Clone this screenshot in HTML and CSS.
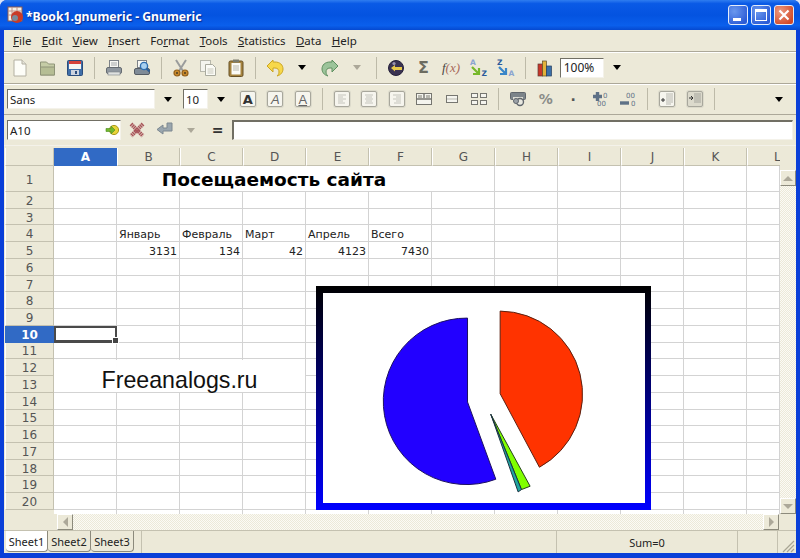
FILE: index.html
```html
<!DOCTYPE html>
<html lang="en">
<head>
  <meta charset="UTF-8">
  <title>*Book1.gnumeric - Gnumeric</title>
  <link rel="stylesheet" href="styles.css">
</head>
<body>
<div class="window">

  <div class="titlebar">
    <svg class="app-icon" width="18" height="18" viewBox="0 0 18 18"><rect x="1" y="1" width="14" height="14" fill="#f4f0e8" stroke="#8a5a50"/><path d="M1 5h14M1 9h14M5 1v14M10 1v14" stroke="#c09088"/><circle cx="10" cy="11" r="6" fill="#c83a28"/><circle cx="8" cy="12" r="3" fill="#7a8a9a"/></svg>
    <span class="title-text">*Book1.gnumeric - Gnumeric</span>
    <div class="win-btns">
      <div class="win-btn"><span class="min-bar"></span></div>
      <div class="win-btn"><span class="max-box"></span></div>
      <div class="win-btn close"><svg width="12" height="12" viewBox="0 0 12 12"><path d="M1.5 1.5l9 9M10.5 1.5l-9 9" stroke="#fff" stroke-width="2.2"/></svg></div>
    </div>
  </div>

  <div class="client">
    <div class="menubar">
      <span><u>F</u>ile</span><span><u>E</u>dit</span><span><u>V</u>iew</span><span><u>I</u>nsert</span><span>Fo<u>r</u>mat</span><span><u>T</u>ools</span><span><u>S</u>tatistics</span><span><u>D</u>ata</span><span><u>H</u>elp</span>
    </div>

    <div class="toolbar">
      <div class="tool"><svg width="20" height="20" viewBox="0 0 20 20"><path d="M4 2h8l4 4v12H4z" fill="#fdfdf8" stroke="#b3b0a2"/><path d="M12 2v4h4" fill="#e6e4da" stroke="#b3b0a2"/></svg></div>
      <div class="tool"><svg width="20" height="20" viewBox="0 0 20 20"><path d="M2.5 17V4h6l2 2h6v11z" fill="#c5cca6" stroke="#8f9478"/><path d="M2.5 9h14v8h-14z" fill="#b5bd94" stroke="#8f9478"/></svg></div>
      <div class="tool"><svg width="20" height="20" viewBox="0 0 20 20"><rect x="2.5" y="2.5" width="15" height="15" rx="1" fill="#3f6ea8" stroke="#2b4d7c"/><rect x="4" y="3" width="12" height="3" fill="#d5413a"/><rect x="4" y="6" width="12" height="5" fill="#f5f5f2"/><rect x="6" y="12" width="8" height="5" fill="#ccd3de"/><rect x="10" y="13" width="2" height="3" fill="#2b4d7c"/></svg></div>
      <div class="sep"></div>
      <div class="tool"><svg width="20" height="20" viewBox="0 0 20 20"><rect x="5.5" y="2.5" width="9" height="7" fill="#f8f8f4" stroke="#7d8288"/><path d="M7 5h6M7 7h6" stroke="#a5a8aa"/><rect x="2.5" y="9.5" width="15" height="6" rx="1.5" fill="#8f979f" stroke="#666c72"/><rect x="4" y="14" width="12" height="3" fill="#dfe1e0" stroke="#7d8288" stroke-width=".6"/></svg></div>
      <div class="tool"><svg width="20" height="20" viewBox="0 0 20 20"><rect x="5.5" y="2.5" width="9" height="7" fill="#f8f8f4" stroke="#7d8288"/><rect x="2.5" y="10.5" width="15" height="6" rx="1.5" fill="#7f8b97" stroke="#555c64"/><circle cx="12" cy="8" r="3.6" fill="#a8d0f0" stroke="#2f6fb0" stroke-width="1.4"/><path d="M14.5 10.5l3 3" stroke="#2f5f95" stroke-width="2"/></svg></div>
      <div class="sep"></div>
      <div class="tool"><svg width="20" height="20" viewBox="0 0 20 20"><path d="M5 2l7 11M15 2L8 13" stroke="#9a9c9c" stroke-width="2"/><circle cx="6" cy="15" r="3" fill="#c88a2c" stroke="#94601a" stroke-width="1.2"/><circle cx="14" cy="15" r="3" fill="#c88a2c" stroke="#94601a" stroke-width="1.2"/><circle cx="6" cy="15" r="1" fill="#4a3a20"/><circle cx="14" cy="15" r="1" fill="#4a3a20"/></svg></div>
      <div class="tool"><svg width="20" height="20" viewBox="0 0 20 20"><rect x="2.5" y="2.5" width="10" height="11" fill="#f4f4ee" stroke="#b8b8ac"/><path d="M7.5 6.5h7l3 3v8h-10z" fill="#fbfbf6" stroke="#a9aa9e"/><path d="M9.5 11h6M9.5 13h6M9.5 15h6" stroke="#c8c8bc"/></svg></div>
      <div class="tool"><svg width="20" height="20" viewBox="0 0 20 20"><rect x="3" y="3" width="14" height="15.5" rx="1.5" fill="#a6843f" stroke="#665026"/><rect x="5.5" y="5" width="9" height="11.5" fill="#fbfbf6"/><path d="M7 8h6M7 10h6M7 12h6" stroke="#b8b8ac"/><rect x="7" y="1.5" width="6" height="3" fill="#7c7c6c"/></svg></div>
      <div class="sep"></div>
      <div class="tool"><svg width="20" height="20" viewBox="0 0 20 20"><path d="M8 2L2 8l6 6v-4h2c3 0 4 2 4 4 0 2-1 3-2 4 4-1 6-4 6-7 0-4-3-7-8-7H8z" fill="#f7d84a" stroke="#cba522"/></svg></div>
      <div class="tool"><span class="arrow"></span></div>
      <div class="tool"><svg width="20" height="20" viewBox="0 0 20 20"><path d="M12 2l6 6-6 6v-4h-2c-3 0-4 2-4 4 0 2 1 3 2 4-4-1-6-4-6-7 0-4 3-7 8-7h2z" fill="#9cc49a" stroke="#5f8f60"/></svg></div>
      <div class="tool"><span class="arrow off"></span></div>
      <div class="sep"></div>
      <div class="tool"><svg width="20" height="20" viewBox="0 0 20 20"><circle cx="10" cy="10" r="7.5" fill="#3a3352" stroke="#25203a"/><path d="M5 10l4-3v2h7v3H9v1.5z" fill="#e8c84a"/><circle cx="8" cy="5.5" r="1.6" fill="#9a94b0"/></svg></div>
      <div class="tool sigma">Σ</div>
      <div class="tool fx"><i>f</i><em>(x)</em></div>
      <div class="tool"><svg width="20" height="20" viewBox="0 0 20 20"><text x="1" y="7" class="sort-a">A</text><path d="M3 9l7 7M10 10v6H4" stroke="#76b82a" stroke-width="2.2" fill="none"/><text x="12.5" y="18" class="sort-z">Z</text></svg></div>
      <div class="tool"><svg width="20" height="20" viewBox="0 0 20 20"><text x="1" y="7" class="sort-z">Z</text><path d="M3 9l7 7M10 10v6H4" stroke="#3a86c8" stroke-width="2.2" fill="none"/><text x="12.5" y="18" class="sort-a">A</text></svg></div>
      <div class="sep"></div>
      <div class="tool"><svg width="20" height="20" viewBox="0 0 20 20"><rect x="3" y="6" width="4.5" height="12" fill="#c8362a" stroke="#5c3a36" stroke-width=".7"/><rect x="7.5" y="3" width="4" height="15" fill="#e2b23a" stroke="#5c4a26" stroke-width=".7"/><rect x="11.5" y="8" width="5" height="10" fill="#3a6fa8" stroke="#2a3f5c" stroke-width=".7"/></svg></div>
      <div class="combo zoom-combo">100%</div>
      <div class="drop"><span class="arrow"></span></div>
    </div>

    <div class="toolbar second">
      <div class="combo font-combo">Sans</div>
      <div class="drop"><span class="arrow"></span></div>
      <div class="combo size-combo">10</div>
      <div class="drop"><span class="arrow"></span></div>
      <div class="tool"><span class="boxed fmt-bold">A</span></div>
      <div class="tool"><span class="boxed fmt-italic">A</span></div>
      <div class="tool"><span class="boxed fmt-under">A</span></div>
      <div class="sep"></div>
      <div class="tool"><span class="boxed"><svg width="12" height="12" viewBox="0 0 12 12"><path d="M2 2h8M2 4h5M2 6h8M2 8h5M2 10h7" stroke="#c4c4bc"/></svg></span></div>
      <div class="tool"><span class="boxed"><svg width="12" height="12" viewBox="0 0 12 12"><path d="M2 2h8M3 4h6M2 6h8M3 8h6M2 10h8" stroke="#c4c4bc"/></svg></span></div>
      <div class="tool"><span class="boxed"><svg width="12" height="12" viewBox="0 0 12 12"><path d="M2 2h8M5 4h5M2 6h8M5 8h5M3 10h7" stroke="#c4c4bc"/></svg></span></div>
      <div class="tool"><svg width="18" height="14" viewBox="0 0 18 14"><rect x="1.5" y="1.5" width="15" height="11" fill="#f4f4ee" stroke="#767670"/><path d="M9 2v4M2 7h14" stroke="#767670" stroke-width="1.4"/><rect x="3" y="3" width="4" height="3" fill="#b8b8b0"/><rect x="11" y="3" width="4" height="3" fill="#b8b8b0"/></svg></div>
      <div class="tool"><svg width="14" height="10" viewBox="0 0 14 10"><rect x="1.5" y="1.5" width="11" height="7" fill="#f4f4ee" stroke="#767670"/><path d="M2 5h10" stroke="#b8b8b0"/></svg></div>
      <div class="tool"><svg width="18" height="14" viewBox="0 0 18 14"><rect x="1.5" y="1.5" width="6" height="4" fill="#f4f4ee" stroke="#767670"/><rect x="10.5" y="1.5" width="6" height="4" fill="#f4f4ee" stroke="#767670"/><rect x="1.5" y="8.5" width="6" height="4" fill="#f4f4ee" stroke="#767670"/><rect x="10.5" y="8.5" width="6" height="4" fill="#f4f4ee" stroke="#767670"/></svg></div>
      <div class="sep"></div>
      <div class="tool"><svg width="18" height="16" viewBox="0 0 18 16"><rect x="1.5" y="1.5" width="15" height="7" rx="1" fill="#7c848a" stroke="#60666c"/><rect x="4" y="6" width="10" height="4" fill="#dcdcd4"/><circle cx="11" cy="11" r="3.5" fill="#e8e8e0" stroke="#60666c" stroke-width="1.4"/><circle cx="7" cy="10" r="2.5" fill="#9ca2a8" stroke="#60666c"/></svg></div>
      <div class="tool percent">%</div>
      <div class="tool dot">.</div>
      <div class="tool"><svg width="18" height="16" viewBox="0 0 18 16"><path d="M5.5 1v9M1 5.5h9" stroke="#5e7186" stroke-width="3.4"/><text x="11" y="7" class="zeros">0</text><text x="5" y="15" class="zeros">00</text></svg></div>
      <div class="tool"><svg width="18" height="16" viewBox="0 0 18 16"><path d="M1 12h9" stroke="#5e7186" stroke-width="3.4"/><text x="7" y="7" class="zeros">00</text><text x="12" y="15" class="zeros">0</text></svg></div>
      <div class="sep"></div>
      <div class="tool"><span class="boxed"><svg width="14" height="14" viewBox="0 0 14 14"><path d="M6 2h7M6 4h7M6 6h7M6 8h7M6 10h7M6 12h5" stroke="#b8b8b0"/><path d="M1 8h4M3 6v4" stroke="#333"/></svg></span></div>
      <div class="tool"><span class="boxed dim"><svg width="14" height="14" viewBox="0 0 14 14"><path d="M6 2h7M6 4h7M6 6h7M6 8h7M6 10h7" stroke="#a4a49c"/><path d="M1 6h4" stroke="#333"/><path d="M3 4l2 2-2 2" stroke="#333" fill="none"/></svg></span></div>
      <div class="sep"></div>
      <div class="drop end"><span class="arrow"></span></div>
    </div>

    <div class="formulabar">
      <div class="combo name-box">A10
        <svg width="14" height="12" viewBox="0 0 14 12"><circle cx="9" cy="6" r="4.6" fill="#e8d43a" stroke="#a8981c"/><path d="M1 4.5h5V2l4 4-4 4V7.5H1z" fill="#72b82e" stroke="#4c8c1c" stroke-width=".6"/></svg>
      </div>
      <div class="tool"><svg width="18" height="18" viewBox="0 0 18 18"><path d="M3 3l12 12M15 3L3 15" stroke="#a8555a" stroke-width="4" stroke-dasharray="1.5 .6"/></svg></div>
      <div class="tool"><svg width="20" height="18" viewBox="0 0 20 18"><path d="M13 2h5v8H9v3L3 8.5 9 4v3h4z" fill="#9aa6ae" stroke="#7c8890"/></svg></div>
      <div class="drop cancel"><span class="arrow off"></span></div>
      <div class="equals">=</div>
      <div class="combo formula-input"></div>
    </div>

    <div class="sheet">
      <div class="grid">
        <div class="corner"></div><div class="ch active">A</div><div class="ch">B</div><div class="ch">C</div><div class="ch">D</div><div class="ch">E</div><div class="ch">F</div><div class="ch">G</div><div class="ch">H</div><div class="ch">I</div><div class="ch">J</div><div class="ch">K</div><div class="ch last">L</div>
        <div class="rh">1</div><div class="c heading">Посещаемость сайта</div><div class="c"></div><div class="c"></div><div class="c"></div><div class="c"></div><div class="c"></div>
        <div class="rh">2</div><div class="c"></div><div class="c"></div><div class="c"></div><div class="c"></div><div class="c"></div><div class="c"></div><div class="c"></div><div class="c"></div><div class="c"></div><div class="c"></div><div class="c"></div><div class="c"></div>
        <div class="rh">3</div><div class="c"></div><div class="c"></div><div class="c"></div><div class="c"></div><div class="c"></div><div class="c"></div><div class="c"></div><div class="c"></div><div class="c"></div><div class="c"></div><div class="c"></div><div class="c"></div>
        <div class="rh">4</div><div class="c"></div><div class="c">Январь</div><div class="c">Февраль</div><div class="c">Март</div><div class="c">Апрель</div><div class="c">Всего</div><div class="c"></div><div class="c"></div><div class="c"></div><div class="c"></div><div class="c"></div><div class="c"></div>
        <div class="rh">5</div><div class="c"></div><div class="c num">3131</div><div class="c num">134</div><div class="c num">42</div><div class="c num">4123</div><div class="c num">7430</div><div class="c"></div><div class="c"></div><div class="c"></div><div class="c"></div><div class="c"></div><div class="c"></div>
        <div class="rh">6</div><div class="c"></div><div class="c"></div><div class="c"></div><div class="c"></div><div class="c"></div><div class="c"></div><div class="c"></div><div class="c"></div><div class="c"></div><div class="c"></div><div class="c"></div><div class="c"></div>
        <div class="rh">7</div><div class="c"></div><div class="c"></div><div class="c"></div><div class="c"></div><div class="c"></div><div class="c"></div><div class="c"></div><div class="c"></div><div class="c"></div><div class="c"></div><div class="c"></div><div class="c"></div>
        <div class="rh">8</div><div class="c"></div><div class="c"></div><div class="c"></div><div class="c"></div><div class="c"></div><div class="c"></div><div class="c"></div><div class="c"></div><div class="c"></div><div class="c"></div><div class="c"></div><div class="c"></div>
        <div class="rh">9</div><div class="c"></div><div class="c"></div><div class="c"></div><div class="c"></div><div class="c"></div><div class="c"></div><div class="c"></div><div class="c"></div><div class="c"></div><div class="c"></div><div class="c"></div><div class="c"></div>
        <div class="rh active">10</div><div class="c selected"></div><div class="c"></div><div class="c"></div><div class="c"></div><div class="c"></div><div class="c"></div><div class="c"></div><div class="c"></div><div class="c"></div><div class="c"></div><div class="c"></div><div class="c"></div>
        <div class="rh">11</div><div class="c"></div><div class="c"></div><div class="c"></div><div class="c"></div><div class="c"></div><div class="c"></div><div class="c"></div><div class="c"></div><div class="c"></div><div class="c"></div><div class="c"></div><div class="c"></div>
        <div class="rh">12</div><div class="c"></div><div class="c"></div><div class="c"></div><div class="c"></div><div class="c"></div><div class="c"></div><div class="c"></div><div class="c"></div><div class="c"></div><div class="c"></div><div class="c"></div><div class="c"></div>
        <div class="rh">13</div><div class="c"></div><div class="c"></div><div class="c"></div><div class="c"></div><div class="c"></div><div class="c"></div><div class="c"></div><div class="c"></div><div class="c"></div><div class="c"></div><div class="c"></div><div class="c"></div>
        <div class="rh">14</div><div class="c"></div><div class="c"></div><div class="c"></div><div class="c"></div><div class="c"></div><div class="c"></div><div class="c"></div><div class="c"></div><div class="c"></div><div class="c"></div><div class="c"></div><div class="c"></div>
        <div class="rh">15</div><div class="c"></div><div class="c"></div><div class="c"></div><div class="c"></div><div class="c"></div><div class="c"></div><div class="c"></div><div class="c"></div><div class="c"></div><div class="c"></div><div class="c"></div><div class="c"></div>
        <div class="rh">16</div><div class="c"></div><div class="c"></div><div class="c"></div><div class="c"></div><div class="c"></div><div class="c"></div><div class="c"></div><div class="c"></div><div class="c"></div><div class="c"></div><div class="c"></div><div class="c"></div>
        <div class="rh">17</div><div class="c"></div><div class="c"></div><div class="c"></div><div class="c"></div><div class="c"></div><div class="c"></div><div class="c"></div><div class="c"></div><div class="c"></div><div class="c"></div><div class="c"></div><div class="c"></div>
        <div class="rh">18</div><div class="c"></div><div class="c"></div><div class="c"></div><div class="c"></div><div class="c"></div><div class="c"></div><div class="c"></div><div class="c"></div><div class="c"></div><div class="c"></div><div class="c"></div><div class="c"></div>
        <div class="rh">19</div><div class="c"></div><div class="c"></div><div class="c"></div><div class="c"></div><div class="c"></div><div class="c"></div><div class="c"></div><div class="c"></div><div class="c"></div><div class="c"></div><div class="c"></div><div class="c"></div>
        <div class="rh">20</div><div class="c"></div><div class="c"></div><div class="c"></div><div class="c"></div><div class="c"></div><div class="c"></div><div class="c"></div><div class="c"></div><div class="c"></div><div class="c"></div><div class="c"></div><div class="c"></div>
        <div class="stub"></div><div class="c"></div><div class="c"></div><div class="c"></div><div class="c"></div><div class="c"></div><div class="c"></div><div class="c"></div><div class="c"></div><div class="c"></div><div class="c"></div><div class="c"></div><div class="c"></div>

        <div class="textbox">Freeanalogs.ru</div>
        <div class="chart">
          <svg class="pie" viewBox="36 38 967 630">
            <path d="M470 113V365L555 597A250 250 0 1 1 470 113Z" fill="#2200ff" stroke="#1c1060" stroke-width="3"/>
            <path d="M568 92V340L686 561A250 250 0 0 0 568 92Z" fill="#ff3300" stroke="#5a2010" stroke-width="3"/>
            <path d="M540 402L658 618 632 628Z" fill="#80ff00" stroke="#24401c" stroke-width="3"/>
            <path d="M540 402L632 628 622 635Z" fill="#1fa5a0" stroke="#1c3040" stroke-width="3"/>
          </svg>
        </div>
      </div>
      <div class="vscroll">
        <div class="sb-gap"></div>
        <div class="sb-btn"><span class="tri up"></span></div>
        <div class="track"></div>
        <div class="sb-btn"><span class="tri down"></span></div>
      </div>
    </div>

    <div class="hscroll">
      <div class="sb-btn first"><span class="tri left"></span></div>
      <div class="track"></div>
      <div class="sb-btn"><span class="tri right"></span></div>
    </div>

    <div class="statusbar">
      <div class="tabs">
        <div class="tab current">Sheet1</div>
        <div class="tab">Sheet2</div>
        <div class="tab">Sheet3</div>
      </div>
      <div class="panel blank"></div>
      <div class="panel sum">Sum=0</div>
      <div class="panel rest"></div>
      <svg class="grip" width="14" height="14" viewBox="0 0 14 14"><path d="M13 2L2 13M13 6L6 13M13 10l-3 3" stroke="#a8a594" stroke-width="1.2"/></svg>
    </div>
  </div>
</div>
</body>
</html>
```

FILE: styles.css
```css
* { box-sizing: border-box; }

body {
  margin: 0;
  background: #d8e4f8;
  font-family: "Noto Sans", sans-serif;
  font-size: 11px;
  color: #222;
}

.window {
  width: 800px;
  height: 558px;
  display: flex;
  flex-direction: column;
  background: #0a3fd8;
  border-radius: 7px 7px 0 0;
  overflow: hidden;
}

/* title bar */
.titlebar {
  height: 30px;
  flex: none;
  display: flex;
  align-items: center;
  padding: 0 6px 0 7px;
  background: linear-gradient(#2f7df0 0, #0a5ae6 12%, #0453e0 50%, #0a5fec 85%, #0549d0 100%);
}

.app-icon { margin-right: 1px; }

.title-text {
  color: #fff;
  font-family: "Noto Sans", sans-serif;
  font-weight: bold;
  font-size: 12.2px;
  padding-top: 2px;
  text-shadow: 1px 1px 1px #0a2a90;
}

.win-btns {
  margin-left: auto;
  display: flex;
  gap: 3px;
}

.win-btn {
  width: 20px;
  height: 20px;
  border: 1px solid #e4ecfa;
  border-radius: 3px;
  background: radial-gradient(circle at 30% 30%, #6a98ee, #2c5cd6 80%);
  display: flex;
  align-items: center;
  justify-content: center;
}

.win-btn.close { background: radial-gradient(circle at 30% 30%, #ec9a80, #d24a28 80%); }

.min-bar {
  width: 8px;
  height: 3px;
  background: #fff;
  margin-top: 9px;
  margin-right: 3px;
}

.max-box {
  width: 12px;
  height: 12px;
  border: 1px solid #fff;
  border-top-width: 3px;
}

/* client area */
.client {
  flex: 1;
  min-height: 0;
  margin: 0 4px 5px;
  background: #ece9d8;
  display: flex;
  flex-direction: column;
}

.menubar {
  height: 22px;
  flex: none;
  display: flex;
  align-items: center;
  gap: 10.3px;
  padding-left: 9px;
  font-size: 11.5px;
  border-bottom: 1px solid #aca899;
  box-shadow: 0 1px 0 #fff;
}

.toolbar {
  height: 32px;
  flex: none;
  display: flex;
  align-items: center;
  padding-left: 2.25px;
  border-bottom: 1px solid #aca899;
  box-shadow: inset 0 1px 0 #fff;
}

.toolbar.second {
  height: 31px;
  padding-left: 3px;
}

.tool {
  width: 27.5px;
  height: 26px;
  flex: none;
  display: flex;
  align-items: center;
  justify-content: center;
}

.sep {
  width: 11.5px;
  height: 22px;
  flex: none;
}

.sep::after {
  content: "";
  display: block;
  width: 1px;
  height: 22px;
  margin: 0 auto;
  background: #bdbaa8;
}

.arrow {
  width: 0;
  height: 0;
  border-left: 4.5px solid transparent;
  border-right: 4.5px solid transparent;
  border-top: 5px solid #000;
}

.arrow.off { border-top-color: #aca899; }

.drop {
  width: 26px;
  height: 22px;
  flex: none;
  display: flex;
  align-items: center;
  justify-content: center;
}

.drop.end {
  margin-left: auto;
  margin-right: 4px;
}

.combo {
  height: 20px;
  flex: none;
  display: flex;
  align-items: center;
  padding-left: 2px;
  background: #fff;
  font-size: 11.5px;
  border-top: 1px solid #716f64;
  border-left: 1px solid #716f64;
  border-right: 1px solid #f4f2ea;
  border-bottom: 1px solid #f4f2ea;
}

.zoom-combo {
  width: 44px;
  margin-left: 1px;
  font-size: 12px;
  padding-left: 3px;
}

.font-combo { width: 148px; }
.size-combo { width: 25px; margin-left: 2px; }

.boxed {
  width: 16px;
  height: 16px;
  display: flex;
  align-items: center;
  justify-content: center;
  background: #f6f5ee;
  border: 1px solid #a8a79c;
  border-radius: 2px;
  box-shadow: 0 0 0 1px #dcdacb;
}

.boxed.dim { background: #dcdacc; }

.fmt-bold {
  font: bold 13px "DejaVu Sans", sans-serif;
  color: #333;
}

.fmt-italic {
  font: italic 13px "Liberation Sans", sans-serif;
  color: #666;
}

.fmt-under {
  font: 13px "Liberation Sans", sans-serif;
  color: #666;
  text-decoration: underline;
}

.sigma {
  font: bold 16px "DejaVu Sans", sans-serif;
  color: #6c6c60;
}

.fx {
  font: italic 13px "Liberation Serif", serif;
  color: #444;
}

.fx em { color: #a86858; }

.sort-a {
  font: bold 7.5px "DejaVu Sans", sans-serif;
  fill: #8aa4d0;
}

.sort-z {
  font: bold 7.5px "DejaVu Sans", sans-serif;
  fill: #2a5a9a;
}

.percent {
  font: bold 14px "DejaVu Sans", sans-serif;
  color: #8a8c88;
}

.dot {
  font: bold 14px "DejaVu Sans", sans-serif;
  color: #555;
  padding-bottom: 6px;
}

.zeros {
  font: 7px "DejaVu Sans", sans-serif;
  fill: #5e7186;
}

/* formula bar */
.formulabar {
  height: 31px;
  flex: none;
  display: flex;
  align-items: center;
  padding-left: 3px;
  border-bottom: 1px solid #f4f2ea;
}

.name-box {
  width: 114px;
  justify-content: space-between;
  padding-right: 0;
}

.name-box svg { margin-right: 1px; }

.formulabar .tool:nth-child(2) { margin-left: 2px; }

.cancel { width: 25px; }

.equals {
  width: 29px;
  text-align: center;
  font: bold 14px "DejaVu Sans", sans-serif;
  color: #333;
  flex: none;
}

.formula-input {
  flex: 1;
  margin-right: 3px;
  border-top: 2px solid #716f64;
  border-left: 2px solid #716f64;
}

/* sheet */
.sheet {
  height: 366px;
  flex: none;
  margin-top: 2px;
  display: flex;
  padding-left: 1px;
}

.grid {
  position: relative;
  width: 775px;
  height: 366px;
  display: grid;
  grid-template-columns: 49px repeat(11, 63px) 33px;
  grid-template-rows: 18px 26px repeat(19, 16.74px) 4px;
  background: #fff;
  font-family: "DejaVu Sans", sans-serif;
  overflow: hidden;
}

.corner, .ch, .rh {
  background: #ece9d8;
  border-right: 1px solid #c4c1b0;
  border-bottom: 1px solid #c4c1b0;
  border-left: 1px solid #fff;
  color: #555;
  font-size: 12px;
  display: flex;
  align-items: center;
  justify-content: center;
}

.ch { padding-top: 1px; }
.rh { padding-top: 2px; }

.ch.last {
  justify-content: flex-start;
  padding-left: 26px;
  border-right: 0;
}

.active {
  background: #316ac5;
  color: #fff;
  font-weight: bold;
  border-color: #316ac5;
}

.stub { background: #ece9d8; }

.c {
  border-right: 1px solid #d3d3d3;
  border-bottom: 1px solid #d3d3d3;
  padding: 4px 2px 0;
  font-size: 11px;
  line-height: 12px;
  color: #222;
  white-space: nowrap;
  display: flex;
  align-items: center;
  min-width: 0;
}

.num { justify-content: flex-end; }

.heading {
  grid-column: span 7;
  justify-content: center;
  padding-top: 2px;
  font-size: 18.5px;
  line-height: 22px;
  font-weight: bold;
  color: #000;
}

.selected {
  position: relative;
  border: 2px solid #4a4a4a;
  border-bottom-width: 3px;
}

.selected::after {
  content: "";
  position: absolute;
  right: -4px;
  bottom: -4px;
  width: 5px;
  height: 5px;
  background: #444;
  border: 1px solid #fff;
}

/* things floating over the cells */
.textbox {
  position: absolute;
  left: 49px;
  top: 212px;
  width: 251px;
  height: 32px;
  padding-top: 8px;
  background: #fff;
  display: flex;
  align-items: center;
  justify-content: center;
  font: 23.2px "Liberation Sans", sans-serif;
  color: #111;
}

.chart {
  position: absolute;
  left: 311px;
  top: 138px;
  width: 335px;
  height: 224px;
  padding: 7px 6px 7px 7px;
  background: linear-gradient(#000, #0000ff);
}

.pie {
  display: block;
  width: 100%;
  height: 100%;
  background: #fff;
}

/* scrollbars */
.vscroll {
  width: 16px;
  flex: none;
  display: flex;
  flex-direction: column;
}

.sb-gap { height: 22px; flex: none; }

.track {
  flex: 1;
  background: repeating-conic-gradient(#ece9d8 0 25%, #fbfaf5 0 50%) 0 0 / 2px 2px;
}

.sb-btn {
  width: 16px;
  height: 16px;
  flex: none;
  display: flex;
  align-items: center;
  justify-content: center;
  background: #ece9d8;
  border-top: 1px solid #fff;
  border-left: 1px solid #fff;
  border-right: 1px solid #8c8a7c;
  border-bottom: 1px solid #8c8a7c;
}

.tri { width: 0; height: 0; }
.tri.up { border: 5px solid transparent; border-top: 0; border-bottom: 5px solid #aca899; }
.tri.down { border: 5px solid transparent; border-bottom: 0; border-top: 5px solid #aca899; }
.tri.left { border: 5px solid transparent; border-left: 0; border-right: 5px solid #aca899; }
.tri.right { border: 5px solid transparent; border-right: 0; border-left: 5px solid #aca899; }

.hscroll {
  height: 16px;
  flex: none;
  display: flex;
  padding: 0 17px 0 53px;
}

.statusbar {
  flex: 1;
  min-height: 0;
  display: flex;
  position: relative;
  border-top: 1px solid #c4c1b0;
}

.tabs {
  display: flex;
  width: 137px;
  padding-left: 2px;
  flex: none;
}

.tab {
  width: 43px;
  height: 21px;
  display: flex;
  align-items: center;
  justify-content: center;
  font-size: 11px;
  border-right: 1px solid #8c8a7c;
  border-bottom: 1px solid #8c8a7c;
  border-radius: 0 0 4px 4px;
  background: #ece9d8;
}

.tab.current { background: #fff; width: 42px; }

.panel {
  height: 100%;
  border-left: 1px solid #c4c1b0;
  display: flex;
  align-items: center;
  justify-content: center;
}

.blank { width: 415px; }

.sum {
  width: 181px;
  font-size: 11px;
}

.rest {
  width: 41px;
  border-right: 1px solid #c4c1b0;
}

.grip {
  position: absolute;
  right: 1px;
  bottom: 0;
}
```
